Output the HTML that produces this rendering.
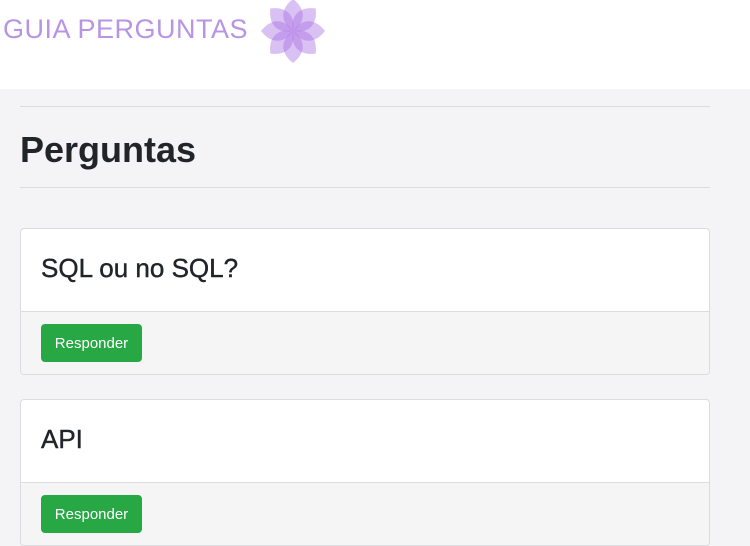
<!DOCTYPE html>
<html><head><style>
body{margin:0;width:750px;height:538px;overflow:hidden;background:#f4f3f6;font-family:"Liberation Sans",sans-serif;color:#212529;position:relative}
.hdr{position:absolute;left:0;top:0;width:750px;height:89px;background:#fff}
.logo{position:absolute;left:3px;top:14px;font-size:27px;color:#b894e4;letter-spacing:0.5px;font-weight:normal}
.hr{position:absolute;left:20px;width:690px;height:1px;background:#dcdbde}
h1{position:absolute;left:20px;top:127px;margin:0;font-size:36px;font-weight:bold;line-height:46px}
.card{position:absolute;left:20px;width:688px;border:1px solid #dcdbde;border-radius:4px;background:#fff;overflow:hidden}
.ch{height:82px;border-bottom:1px solid #dcdbde;position:relative}
.ch span{position:absolute;left:20px;top:22px;font-size:26px;line-height:34px;-webkit-text-stroke:0.4px #212529}
.cf{height:62px;background:#f5f5f6;position:relative}
.btn{position:absolute;left:20px;top:12px;width:101px;height:38px;background:#28a745;border-radius:4px;color:#fff;font-size:15px;line-height:40px;text-align:center}
</style></head><body>
<div class="hdr">
<div class="logo">GUIA PERGUNTAS</div>
<svg style="position:absolute;left:258px;top:-2px" width="70" height="66" viewBox="-35 -33 70 66">
<defs><path id="p" d="M0,0 C13,-9 13,-22 0,-32 C-13,-22 -13,-9 0,0Z"/></defs>
<g fill="#a66be2" fill-opacity="0.42">
<use href="#p"/>
<use href="#p" transform="rotate(45)"/>
<use href="#p" transform="rotate(90)"/>
<use href="#p" transform="rotate(135)"/>
<use href="#p" transform="rotate(180)"/>
<use href="#p" transform="rotate(225)"/>
<use href="#p" transform="rotate(270)"/>
<use href="#p" transform="rotate(315)"/>
</g></svg>
</div>
<div class="hr" style="top:106px"></div>
<h1>Perguntas</h1>
<div class="hr" style="top:187px"></div>
<div class="card" style="top:228px"><div class="ch"><span>SQL ou no SQL?</span></div><div class="cf"><div class="btn">Responder</div></div></div>
<div class="card" style="top:399px"><div class="ch"><span>API</span></div><div class="cf"><div class="btn">Responder</div></div></div>
</body></html>
